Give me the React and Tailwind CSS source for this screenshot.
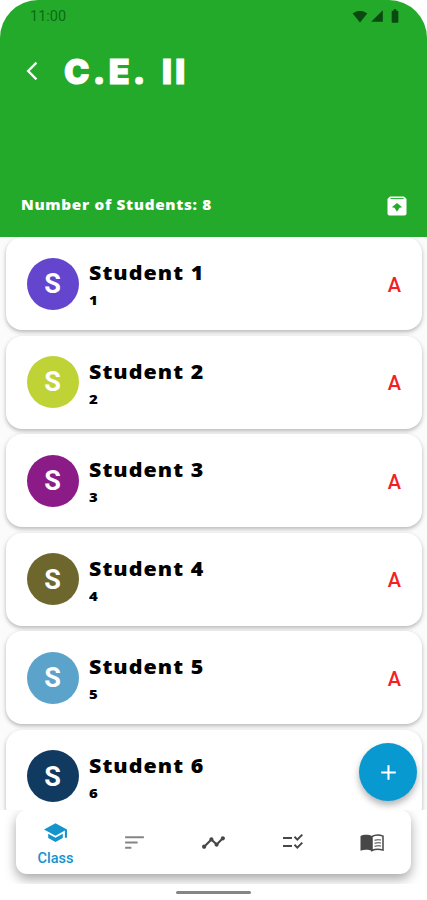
import {
  MdAdd,
  MdArrowBackIosNew,
  MdBatteryFull,
  MdChecklistRtl,
  MdSchool,
  MdSignalCellular4Bar,
  MdSignalWifi4Bar,
  MdSort,
  MdTimeline,
} from 'react-icons/md';

const students = [
  { id: 1, color: 'bg-[#6445cd]' },
  { id: 2, color: 'bg-[#bfd336]' },
  { id: 3, color: 'bg-[#8b1b86]' },
  { id: 4, color: 'bg-[#6d672e]' },
  { id: 5, color: 'bg-[#5ba3cb]' },
  { id: 6, color: 'bg-[#103a60]' },
];

const UnarchiveIcon = () => (
  <svg className="h-[20px] w-[20px]" viewBox="0 0 20 20">
    <path fill="currentColor" d="M3 0.5h14L19.5 3v14.5a2 2 0 0 1-2 2h-15a2 2 0 0 1-2-2V3z" />
    <path stroke="#23aa2a" strokeWidth="1" d="M3.5 2.6h13" />
    <path fill="#23aa2a" d="M10 7l5.200 4.300-2.700.5L10 15.800l-2.500-4-2.700-.5z" />
  </svg>
);

const BookIcon = () => (
  <svg className="h-[18px] w-[24px]" viewBox="0 0 24 18" fill="none">
    <path fill="currentColor" d="M0.5 2C3 .6 9 .3 12 2.2v15c-3-1.7-8-1.7-11.5-.4z" />
    <path stroke="currentColor" strokeWidth="1.5" d="M12 2.5c3-1.6 7.8-1.6 11-.4v14c-3.200-1-8-1-11 .4z" />
    <path stroke="currentColor" strokeWidth="1.1" d="M14.500 6.200c2-.6 4.500-.6 6.500-.2M14.500 9.200c2-.6 4.500-.6 6.500-.2M14.500 12.200c2-.6 4.500-.6 6.500-.2" />
  </svg>
);

const StatusBar = () => (
  <div className="flex h-8 items-center justify-between pl-[30px] pr-[24px] text-[#0b6a13]">
    <span className="pt-[2px] font-[Roboto,sans-serif] text-[14.500px] leading-none">11:00</span>
    <div className="flex items-center text-[#0a4a10]">
      <MdSignalWifi4Bar className="h-[15px] w-[16px]" />
      <MdSignalCellular4Bar className="ml-[2px] h-[14px] w-[14px]" />
      <MdBatteryFull className="ml-[3px] h-[16px] w-[16px]" />
    </div>
  </div>
);

const Header = () => (
  <header className="flex h-[237px] shrink-0 flex-col rounded-t-[38px] bg-[#23aa2a] text-white">
    <StatusBar />
    <div className="mt-[13px] flex h-[52px] items-center pl-[21px]">
      <MdArrowBackIosNew className="h-[22px] w-[22px] stroke-current" />
      <h1 className="ml-[21px] pt-[2px] whitespace-pre font-[Inter,sans-serif] text-[34px] leading-none font-black tracking-[3.300px] [word-spacing:5px] [-webkit-text-stroke:1px_white]">C.E. II</h1>
    </div>
    <div className="mt-auto mb-[21px] flex items-center justify-between pl-[21px] pr-[20px]">
      <p className="mb-[2px] origin-left scale-x-[1.095] text-[14px] leading-none font-extrabold tracking-[0.6px]">Number of Students: 8</p>
      <UnarchiveIcon />
    </div>
  </header>
);

const StudentCard = ({ student }) => (
  <div className="flex h-[93px] shrink-0 items-center rounded-[16px] bg-white pl-[20.500px] pr-[21px] shadow-[0_2px_4px_rgba(0,0,0,0.28)]">
    <div className={`flex h-[52px] w-[52px] items-center justify-center rounded-full pt-[1px] font-[Roboto,sans-serif] text-[27px] font-bold text-white ${student.color}`}>
      S
    </div>
    <div className="ml-[10.500px] flex-1 pt-[2px] text-black">
      <h2 className="origin-left scale-x-[1.07] text-[20px] leading-[27px] font-extrabold tracking-[1px]">Student {student.id}</h2>
      <p className="mt-[4px] origin-left scale-x-[1.150] text-[13px] leading-[20px] font-extrabold">{student.id}</p>
    </div>
    {student.id < 6 && <span className="pt-[2px] font-[Roboto,sans-serif] text-[20px] font-medium text-[#f4201f]">A</span>}
  </div>
);

const BottomNavigation = () => (
  <div className="flex h-[90px] shrink-0 flex-col bg-white">
    <div className="h-[74px] overflow-hidden px-[16px]">
      <nav className="flex h-[64px] items-center rounded-[11px] bg-white text-[#474747] shadow-[0_5px_12px_rgba(0,0,0,0.35)]">
        <a className="flex flex-1 flex-col items-center pt-[2px] text-[#1493cd]">
          <MdSchool className="h-[25px] w-[25px]" />
          <span className="mt-[6px] font-[Roboto,sans-serif] text-[14.500px] leading-[16px] font-medium">Class</span>
        </a>
        <a className="flex flex-1 justify-center text-[#858585]"><MdSort className="h-[25px] w-[25px]" /></a>
        <a className="flex flex-1 justify-center"><MdTimeline className="h-[25px] w-[25px]" /></a>
        <a className="flex flex-1 justify-center"><MdChecklistRtl className="h-[24px] w-[24px]" /></a>
        <a className="flex flex-1 justify-center pt-[1px]"><BookIcon /></a>
      </nav>
    </div>
    <div className="mx-auto mt-[7px] h-[3px] w-[75px] rounded-full bg-[#858585]" />
  </div>
);

const App = () => (
  <div className="relative flex h-[900px] w-[427px] flex-col overflow-hidden bg-white font-['Open_Sans','Noto_Sans',sans-serif]">
    <Header />
    <main className="flex h-[573px] shrink-0 flex-col gap-[5.6px] overflow-hidden bg-[#fbfbfb] pl-[6px] pr-[5px]">
      {students.map((student) => (
        <StudentCard key={student.id} student={student} />
      ))}
    </main>
    <BottomNavigation />
    <button className="absolute top-[743px] left-[359px] flex h-[58px] w-[58px] items-center justify-center rounded-full bg-[#0899d0] text-white shadow-[0_4px_7px_rgba(0,0,0,0.3)]">
      <MdAdd className="h-[25px] w-[25px]" />
    </button>
  </div>
);

export default App;
